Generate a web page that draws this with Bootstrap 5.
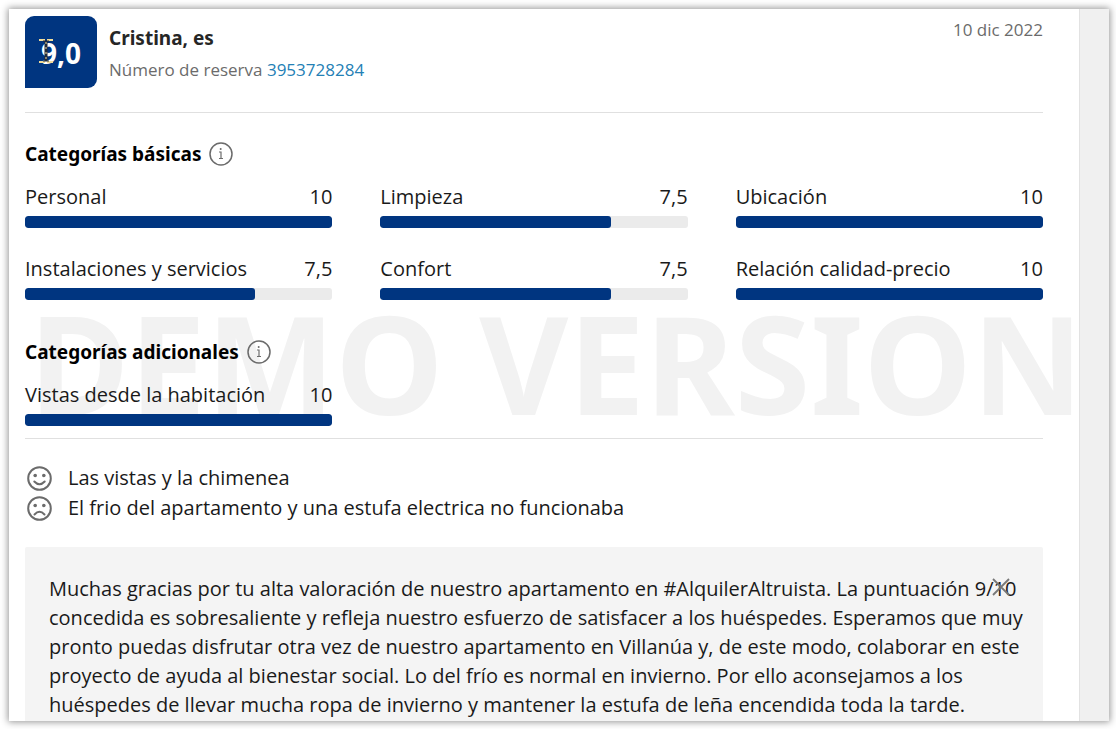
<!DOCTYPE html>
<html lang="es">
<head>
<meta charset="utf-8">
<meta name="viewport" content="width=device-width, initial-scale=1">
<title>Comentario de Cristina</title>
<link href="https://cdn.jsdelivr.net/npm/bootstrap@5.3.0/dist/css/bootstrap.min.css" rel="stylesheet">
<style>
  body { font-family: "Open Sans", "Noto Sans", sans-serif; font-size: 20px; line-height: 30px; color: #1a1a1a; background: #fff; padding: 9px 7px 8px 9px; }
  .review-window { box-shadow: 0 0 7px 1px rgba(0,0,0,.42); min-height: calc(100vh - 17px); }
  .review-pane { isolation: isolate; padding: 7px 36px 0 16px; border-right: 1px solid #e2e2e2; min-width: 0; }
  .scroll-track { width: 29px; background: #f0f0f0; }
  .score-box { width: 72px; height: 72px; padding-top: 2px; background: #003580; color: #fff; border-radius: 9px 9px 9px 0; font-size: 28px; font-weight: 700; }
  .guest-name { font-family: "Noto Sans", "Open Sans", sans-serif; font-size: 19px; line-height: 30px; font-weight: 700; color: #262626; margin: 7px 0 3px; }
  .muted-text { font-size: 17px; line-height: 28px; color: #6b6b6b; }
  .muted-text a { color: #2480b5; }
  .rule { border-top: 1px solid #e0e0e0; }
  .section-title { font-family: "Noto Sans", "Open Sans", sans-serif; font-size: 19px; line-height: 30px; font-weight: 700; color: #000; margin-bottom: 13px; }
  .scores { --bs-gutter-x: 48px; --bs-gutter-y: 26px; }
  .progress { --bs-progress-height: 12px; --bs-progress-bg: #ebebeb; --bs-progress-bar-bg: #003580; --bs-progress-border-radius: 3px; margin-top: 4px; }
  .progress-bar { border-radius: 3px; }
  .basic { padding-top: 26px; }
  .extra { padding: 37px 0 12px; }
  .watermark { left: 20px; top: 286px; z-index: -1; font-family: "Noto Sans", "Open Sans", sans-serif; font-size: 137px; line-height: 134px; font-weight: 700; color: #f2f2f2; white-space: nowrap; }
  .opinions { padding: 24px 0 24px 2px; }
  .reply { background: #f4f4f4; border-radius: 2px 2px 0 0; padding: 27px 16px 2px 24px; line-height: 29px; }
  .reply-close { right: 33px; top: 31px; width: 18px; height: 18px; color: #777; }
  .text-cursor { left: 13px; top: 22px; }
</style>
</head>
<body>
<div class="review-window d-flex">
  <main class="review-pane position-relative flex-grow-1">
    <div class="watermark position-absolute" aria-hidden="true">DEMO VERSION</div>
    <header class="d-flex pb-4">
      <div class="score-box position-relative d-flex align-items-center justify-content-center">9,0
        <svg class="text-cursor position-absolute" width="16" height="26" viewBox="0 0 16 26" fill="none" aria-hidden="true">
          <path d="M1 2H7M9 2H15M1 24H7M9 24H15" stroke="#f1dc9b" stroke-width="2"/>
          <path d="M5 3H11M5 23H11" stroke="#222b38" stroke-width="1"/>
          <path d="M8 3V23" stroke="#222b38" stroke-width="3"/>
          <path d="M8 4V22" stroke="#f1dc9b" stroke-width="1" stroke-dasharray="2 3"/>
        </svg>
      </div>
      <div class="ms-2 ps-1 flex-grow-1">
        <h1 class="guest-name">Cristina, es</h1>
        <div class="muted-text">Número de reserva <a href="#" class="text-decoration-none">3953728284</a></div>
      </div>
      <time class="muted-text" datetime="2022-12-10">10 dic 2022</time>
    </header>
    <section class="basic rule">
      <h2 class="section-title d-flex align-items-center gap-2">Categorías básicas
        <svg width="24" height="24" viewBox="0 0 24 24" fill="none" stroke="#6b6b6b" aria-hidden="true"><circle cx="12" cy="12" r="11" stroke-width="1.5"/><path d="M10 10H12V16.5M10 16.5H14" stroke-width="1.2"/><circle cx="11.7" cy="7" r="1" fill="#6b6b6b" stroke="none"/></svg>
      </h2>
      <div class="scores row row-cols-3">
        <div class="col"><div class="d-flex justify-content-between"><span>Personal</span><span>10</span></div><div class="progress" role="progressbar" aria-label="Personal" aria-valuenow="100"><div class="progress-bar" style="width:100%"></div></div></div>
        <div class="col"><div class="d-flex justify-content-between"><span>Limpieza</span><span>7,5</span></div><div class="progress" role="progressbar" aria-label="Limpieza" aria-valuenow="75"><div class="progress-bar" style="width:75%"></div></div></div>
        <div class="col"><div class="d-flex justify-content-between"><span>Ubicación</span><span>10</span></div><div class="progress" role="progressbar" aria-label="Ubicación" aria-valuenow="100"><div class="progress-bar" style="width:100%"></div></div></div>
        <div class="col"><div class="d-flex justify-content-between"><span>Instalaciones y servicios</span><span>7,5</span></div><div class="progress" role="progressbar" aria-label="Instalaciones y servicios" aria-valuenow="75"><div class="progress-bar" style="width:75%"></div></div></div>
        <div class="col"><div class="d-flex justify-content-between"><span>Confort</span><span>7,5</span></div><div class="progress" role="progressbar" aria-label="Confort" aria-valuenow="75"><div class="progress-bar" style="width:75%"></div></div></div>
        <div class="col"><div class="d-flex justify-content-between"><span>Relación calidad-precio</span><span>10</span></div><div class="progress" role="progressbar" aria-label="Relación calidad-precio" aria-valuenow="100"><div class="progress-bar" style="width:100%"></div></div></div>
      </div>
    </section>
    <section class="extra">
      <h2 class="section-title d-flex align-items-center gap-2">Categorías adicionales
        <svg width="24" height="24" viewBox="0 0 24 24" fill="none" stroke="#6b6b6b" aria-hidden="true"><circle cx="12" cy="12" r="11" stroke-width="1.5"/><path d="M10 10H12V16.5M10 16.5H14" stroke-width="1.2"/><circle cx="11.7" cy="7" r="1" fill="#6b6b6b" stroke="none"/></svg>
      </h2>
      <div class="scores row row-cols-3">
        <div class="col"><div class="d-flex justify-content-between"><span>Vistas desde la habitación</span><span>10</span></div><div class="progress" role="progressbar" aria-label="Vistas desde la habitación" aria-valuenow="100"><div class="progress-bar" style="width:100%"></div></div></div>
      </div>
    </section>
    <section class="opinions rule">
      <div class="d-flex align-items-center gap-3">
        <svg width="25" height="25" viewBox="0 0 25 25" fill="none" stroke="#6b6b6b" stroke-width="2" aria-hidden="true"><circle cx="12.5" cy="12.5" r="11.3"/><path d="M7.3 15.5Q12.5 21 17.7 15.5" stroke-linecap="round"/><circle cx="8.2" cy="9.5" r="1.8" fill="#6b6b6b" stroke="none"/><circle cx="16.8" cy="9.5" r="1.8" fill="#6b6b6b" stroke="none"/></svg>
        <span>Las vistas y la chimenea</span>
      </div>
      <div class="d-flex align-items-center gap-3">
        <svg width="25" height="25" viewBox="0 0 25 25" fill="none" stroke="#6b6b6b" stroke-width="2" aria-hidden="true"><circle cx="12.5" cy="12.5" r="11.3"/><path d="M7.5 18.5Q12.5 13.2 17.5 18.5" stroke-linecap="round"/><circle cx="8.2" cy="9.5" r="1.8" fill="#6b6b6b" stroke="none"/><circle cx="16.8" cy="9.5" r="1.8" fill="#6b6b6b" stroke="none"/></svg>
        <span>El frio del apartamento y una estufa electrica no funcionaba</span>
      </div>
    </section>
    <section class="reply position-relative">
      <p class="m-0">Muchas gracias por tu alta valoración de nuestro apartamento en #AlquilerAltruista. La puntuación 9/10 concedida es sobresaliente y refleja nuestro esfuerzo de satisfacer a los huéspedes. Esperamos que muy pronto puedas disfrutar otra vez de nuestro apartamento en Villanúa y, de este modo, colaborar en este proyecto de ayuda al bienestar social. Lo del frío es normal en invierno. Por ello aconsejamos a los huéspedes de llevar mucha ropa de invierno y mantener la estufa de leña encendida toda la tarde.</p>
      <button type="button" class="reply-close position-absolute d-flex p-0 border-0 bg-transparent" aria-label="Cerrar">
        <svg width="18" height="18" viewBox="0 0 18 18" fill="none" stroke="currentColor" stroke-width="1.8"><path d="M1 1L17 17M17 1L1 17"/></svg>
      </button>
    </section>
  </main>
  <div class="scroll-track flex-shrink-0"></div>
</div>
<script src="https://cdn.jsdelivr.net/npm/bootstrap@5.3.0/dist/js/bootstrap.bundle.min.js"></script>
</body>
</html>
